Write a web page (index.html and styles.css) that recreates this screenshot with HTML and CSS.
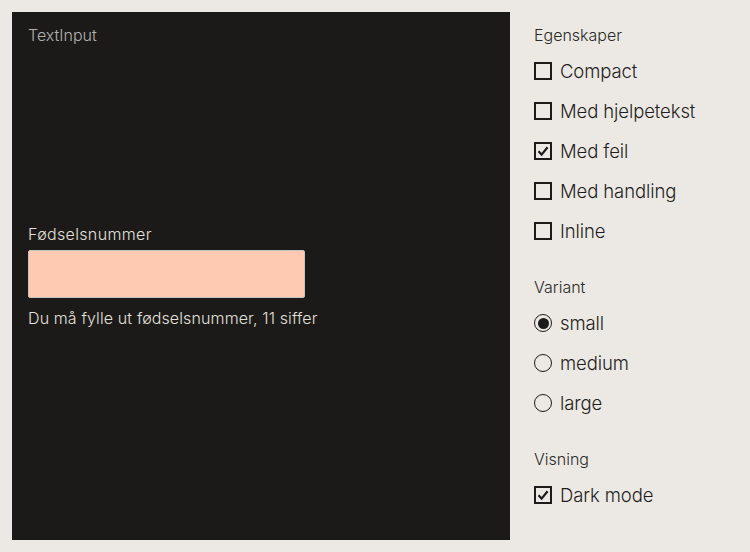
FILE: index.html
```html
<!DOCTYPE html>
<html lang="no">
<head>
<meta charset="utf-8">
<title>TextInput</title>
<link rel="stylesheet" href="styles.css">
</head>
<body>
<main class="preview">
  <div class="preview-title">TextInput</div>
  <div class="field">
    <label class="field-label" for="fnr">Fødselsnummer</label>
    <input class="field-input" id="fnr" type="text">
    <div class="field-error">Du må fylle ut fødselsnummer, 11 siffer</div>
  </div>
</main>
<aside class="controls">
  <section class="group">
    <div class="group-title">Egenskaper</div>
    <div class="row"><span class="box"></span><span class="row-label">Compact</span></div>
    <div class="row"><span class="box"></span><span class="row-label">Med hjelpetekst</span></div>
    <div class="row"><span class="box checked"><svg viewBox="0 0 18 18" width="18" height="18"><path d="M4.5 9.3 L7.6 12.6 L13.6 5.2" fill="none" stroke="#1c1b19" stroke-width="2.2"/></svg></span><span class="row-label">Med feil</span></div>
    <div class="row"><span class="box"></span><span class="row-label">Med handling</span></div>
    <div class="row"><span class="box"></span><span class="row-label">Inline</span></div>
  </section>
  <section class="group">
    <div class="group-title">Variant</div>
    <div class="row"><span class="radio selected"></span><span class="row-label">small</span></div>
    <div class="row"><span class="radio"></span><span class="row-label">medium</span></div>
    <div class="row"><span class="radio"></span><span class="row-label">large</span></div>
  </section>
  <section class="group">
    <div class="group-title">Visning</div>
    <div class="row"><span class="box checked"><svg viewBox="0 0 18 18" width="18" height="18"><path d="M4.5 9.3 L7.6 12.6 L13.6 5.2" fill="none" stroke="#1c1b19" stroke-width="2.2"/></svg></span><span class="row-label">Dark mode</span></div>
  </section>
</aside>
</body>
</html>
```
FILE: styles.css
```css
html, body {
  margin: 0;
  padding: 0;
}
body {
  background: #ece9e5;
  font-family: Inter, "Noto Sans", sans-serif;
  font-weight: 300;
  padding: 12px;
  display: flex;
  gap: 24px;
  box-sizing: border-box;
  width: 750px;
  height: 552px;
}
.preview {
  width: 498px;
  height: 528px;
  background: #1b1a18;
  box-sizing: border-box;
  padding: 11px 16px;
  display: grid;
  grid-template-areas: "stack";
}
.preview-title {
  grid-area: stack;
  align-self: start;
  color: #b3b1ae;
  font-size: 16px;
  line-height: 24px;
}
.field {
  grid-area: stack;
  align-self: center;
  display: flex;
  flex-direction: column;
}
.field-label {
  color: #e2e0dd;
  font-size: 16px;
  line-height: 24px;
  margin-bottom: 4px;
  letter-spacing: 0.35px;
}
.field-input {
  width: 277px;
  height: 48px;
  box-sizing: border-box;
  background: #ffc9b2;
  border: 1px solid #c8c4bf;
  border-radius: 2px;
  margin: 0;
  padding: 0 12px;
}
.field-error {
  color: #e2e0dd;
  font-size: 16px;
  line-height: 24px;
  margin-top: 8px;
  letter-spacing: 0.12px;
}
.controls {
  padding-top: 11px;
  display: flex;
  flex-direction: column;
  gap: 24px;
  color: #1f1e1b;
}
.group-title {
  font-size: 16px;
  line-height: 24px;
  margin-bottom: 4px;
  color: #2b2a27;
}
.row {
  height: 40px;
  display: flex;
  align-items: center;
  gap: 8px;
}
.row-label {
  font-size: 18.5px;
  line-height: 24px;
  letter-spacing: -0.1px;
}
.box {
  width: 18px;
  height: 18px;
  box-sizing: border-box;
  border: 2px solid #1c1b19;
  position: relative;
  flex: none;
}
.box svg {
  position: absolute;
  left: -2px;
  top: -2px;
}
.radio {
  width: 18px;
  height: 18px;
  box-sizing: border-box;
  border: 1.5px solid #1c1b19;
  border-radius: 50%;
  flex: none;
  display: flex;
  align-items: center;
  justify-content: center;
}
.radio.selected::after {
  content: "";
  width: 11px;
  height: 11px;
  border-radius: 50%;
  background: #1c1b19;
}
```
